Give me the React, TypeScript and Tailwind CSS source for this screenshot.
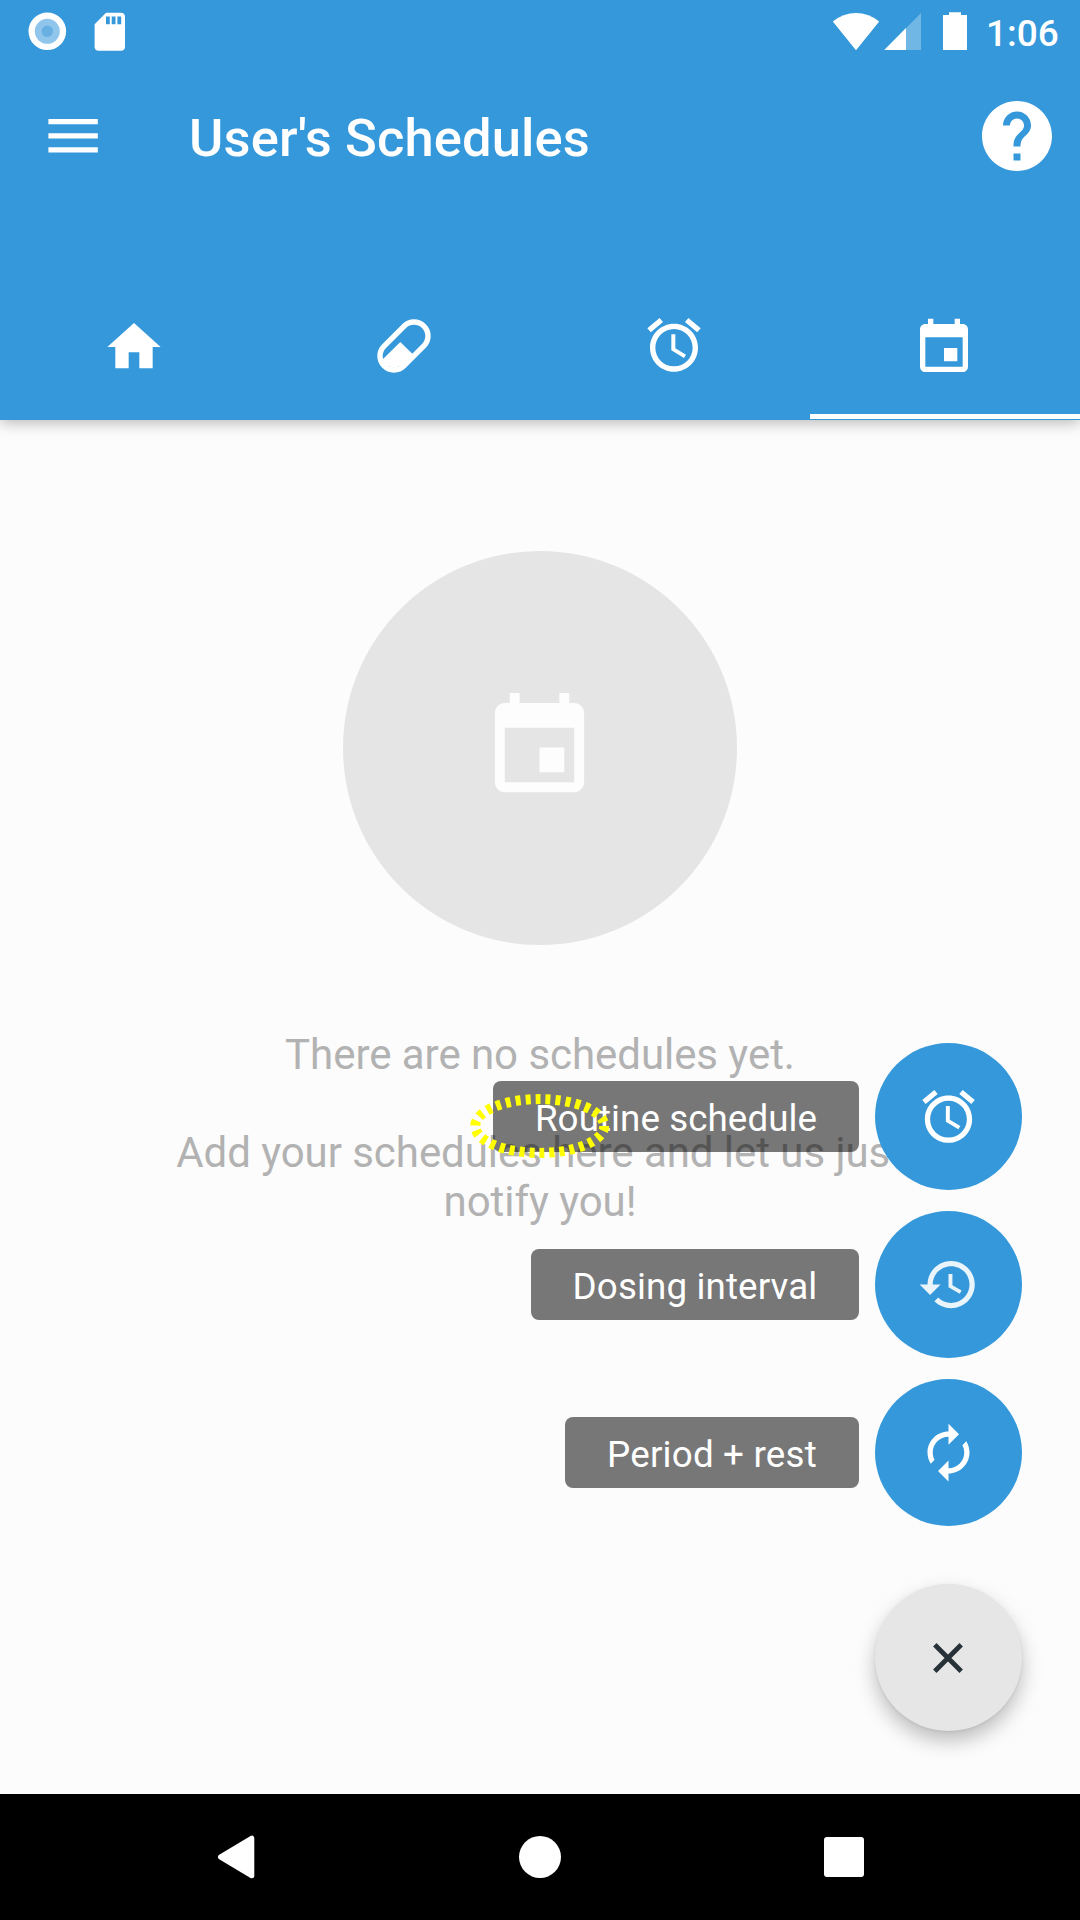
import type { ReactNode } from "react";

const EVENT =
  "M17 12h-5v5h5v-5zM16 1v2H8V1H6v2H5c-1.11 0-1.99.9-1.99 2L3 19c0 1.1.89 2 2 2h14c1.1 0 2-.9 2-2V5c0-1.1-.9-2-2-2h-1V1h-2zm3 18H5V8h14v11z";
const ALARM =
  "M22 5.72l-4.6-3.86-1.29 1.53 4.6 3.86L22 5.72zM7.88 3.39L6.6 1.86 2 5.71l1.29 1.53 4.59-3.85zM12.5 8H11v6l4.75 2.85.75-1.23-4-2.37V8zM12 4c-4.97 0-9 4.03-9 9s4.02 9 9 9c4.97 0 9-4.03 9-9s-4.03-9-9-9zm0 16c-3.87 0-7-3.13-7-7s3.13-7 7-7 7 3.13 7 7-3.13 7-7 7z";
const HOME = "M10 20v-6h4v6h5v-8h3L12 3 2 12h3v8z";
const HISTORY =
  "M13 3c-4.97 0-9 4.03-9 9H1l3.89 3.89.07.14L9 12H6c0-3.87 3.13-7 7-7s7 3.13 7 7-3.13 7-7 7c-1.93 0-3.68-.79-4.94-2.06l-1.42 1.42C8.27 19.99 10.51 21 13 21c4.97 0 9-4.03 9-9s-4.03-9-9-9zm-1 5v5l4.28 2.54.72-1.21-3.5-2.08V8H12z";
const AUTORENEW =
  "M12 6v3l4-4-4-4v3c-4.42 0-8 3.58-8 8 0 1.57.46 3.03 1.24 4.26L6.7 14.8c-.45-.83-.7-1.79-.7-2.8 0-3.31 2.69-6 6-6zm6.76 1.74L17.3 9.2c.44.84.7 1.79.7 2.8 0 3.31-2.69 6-6 6v-3l-4 4 4 4v-3c4.42 0 8-3.58 8-8 0-1.57-.46-3.03-1.24-4.26z";
const HELP =
  "M12 2C6.48 2 2 6.48 2 12s4.48 10 10 10 10-4.48 10-10S17.52 2 12 2zm1 17h-2v-2h2v2zm2.07-7.75l-.9.92C13.45 12.9 13 13.5 13 15h-2v-.5c0-1.1.45-2.1 1.17-2.83l1.24-1.26c.37-.36.59-.86.59-1.41 0-1.1-.9-2-2-2s-2 .9-2 2H8c0-2.21 1.79-4 4-4s4 1.79 4 4c0 .88-.36 1.68-.93 2.25z";
const SD_CARD =
  "M18 2h-8L4.02 8 4 20c0 1.1.9 2 2 2h12c1.1 0 2-.9 2-2V4c0-1.1-.9-2-2-2zm-6 6h-2V4h2v4zm3 0h-2V4h2v4zm3 0h-2V4h2v4z";

function Icon({ d, className }: { d: string; className: string }) {
  return (
    <svg viewBox="0 0 24 24" fill="currentColor" className={className}>
      <path d={d} />
    </svg>
  );
}

function PillIcon() {
  return (
    <svg viewBox="0 0 64 64" className="size-16" fill="none">
      <path
        d="M12.1 32.1 L32.1 12.1 A14 14 0 0 1 51.9 31.9 L31.9 51.9 A14 14 0 0 1 12.1 32.1 Z"
        stroke="white"
        strokeWidth="5.4"
      />
      <path d="M10 46 L28.3 28 L40.6 39.9 L31 51 L22 54 L13 51 Z" fill="white" />
    </svg>
  );
}

function StatusBar() {
  return (
    <div className="flex h-[63px] items-start justify-between text-white">
      <div className="flex items-start">
        <svg viewBox="0 0 40 40" className="mt-[11px] ml-[27px] size-10">
          <circle cx="20.3" cy="20.3" r="18.8" fill="white" />
          <circle cx="20.3" cy="20.3" r="12.5" fill="#90c5ec" />
          <circle cx="20.3" cy="20.3" r="5.7" fill="#68afe2" />
        </svg>
        <Icon d={SD_CARD} className="mt-[8.6px] ml-[20.3px] size-[45.6px]" />
      </div>
      <div className="flex items-start pr-[21px]">
        <svg viewBox="832 12 136 39" className="mt-3 h-[39px] w-[136px]" fill="white">
          <path d="M832.8 21.6 Q843 13 856 13 Q869 13 879.2 21.6 L856 50.2 Z" />
          <path d="M884.3 50 L921 13 V50 Z" fillOpacity="0.3" />
          <path d="M884.3 50 L906 28.1 V50 Z" />
          <path d="M943 15 H949 V12.2 H961 V15 H967 V50 H943 Z" />
        </svg>
        <span className="mt-[12px] ml-[18px] w-[73px] text-[37px] leading-[43px] font-medium whitespace-nowrap">1:06</span>
      </div>
    </div>
  );
}

function Header() {
  return (
    <header className="relative z-10 flex h-[420px] flex-col bg-[#3498db] shadow-[0_3px_14px_rgba(0,0,0,0.27)]">
      <StatusBar />
      <div className="flex h-[147px] items-center pb-px text-white">
        <svg viewBox="0 0 50 36" className="ml-12 h-9 w-[50px]" fill="white">
          <path d="M.4 1h49.4v5.3H.4zM.4 15.2h49.4v5.3H.4zM.4 29.3h49.4v5.3H.4z" />
        </svg>
        <h1 className="ml-[91px] pt-[3px] text-[52.5px] leading-[62px] font-medium tracking-[0.13px]">User's Schedules</h1>
        <Icon d={HELP} className="mr-[21px] ml-auto size-[84px]" />
      </div>
      <nav className="mt-auto grid h-[126px] grid-cols-4 text-white">
        <div className="flex justify-center pt-[21px] pr-[2px]">
          <Icon d={HOME} className="size-16" />
        </div>
        <div className="flex justify-center pt-[19.5px] pr-[2px]">
          <PillIcon />
        </div>
        <div className="flex justify-center pt-[19px] pr-[2px]">
          <Icon d={ALARM} className="size-16" />
        </div>
        <div className="flex flex-col items-center justify-between pt-[21.6px] pb-px">
          <Icon d={EVENT} className="mr-[2px] size-16" />
          <div className="h-[5px] w-full bg-white" />
        </div>
      </nav>
    </header>
  );
}

function MenuItem({ label, labelClass, children }: { label: string; labelClass: string; children: ReactNode }) {
  return (
    <div className="flex items-center gap-4">
      <span
        className={`flex h-[71px] items-center justify-center rounded-[8px] bg-black/53 pt-[3px] text-[36.75px] leading-[43px] whitespace-nowrap text-white ${labelClass}`}
      >
        {label}
      </span>
      <div className="flex size-[147px] items-center justify-center rounded-full bg-[#3498db]">{children}</div>
    </div>
  );
}

export default function App() {
  return (
    <div className="flex h-[1920px] w-[1080px] flex-col overflow-hidden bg-[#fcfcfc] font-['Roboto',sans-serif]">
      <Header />
      <main className="relative flex grow flex-col items-center pt-[131px]">
        <div className="flex size-[394px] items-center justify-center rounded-full bg-[#e5e5e5] text-[#fdfdfd]">
          <Icon d={EVENT} className="mr-[1px] mb-[1px] size-[119px]" />
        </div>
        <div className="mt-[85px] px-[120px] text-center text-[42px] leading-[49px] tracking-[-0.05px] text-[#b2b2b2]">
          <p>There are no schedules yet.</p>
          <p className="mt-[49px]">
            Add your schedules here and let us just
            <br />
            notify you!
          </p>
        </div>

        <div className="absolute top-[623.3px] right-[58px] flex flex-col items-end gap-[21px]">
          <MenuItem label="Routine schedule" labelClass="w-[366px] tracking-[0.07px]">
            <Icon d={ALARM} className="size-[63px] text-white" />
          </MenuItem>
          <MenuItem label="Dosing interval" labelClass="w-[328px] tracking-[0.12px]">
            <Icon d={HISTORY} className="size-[63px] text-[#e9f4fb]" />
          </MenuItem>
          <MenuItem label="Period + rest" labelClass="w-[294px] tracking-[0.2px]">
            <Icon d={AUTORENEW} className="size-[63px] text-white" />
          </MenuItem>
          <div className="mt-[37px] flex size-[147px] items-center justify-center rounded-full bg-[#e6e6e6] shadow-[0_10px_20px_rgba(0,0,0,0.25),0_1px_3px_rgba(0,0,0,0.08)]">
            <svg viewBox="0 0 32 32" className="mr-[1px] size-8" stroke="#263238" strokeWidth="4.8">
              <path d="M2.8 2.8 L29.2 29.2 M29.2 2.8 L2.8 29.2" />
            </svg>
          </div>
        </div>

        <svg viewBox="0 0 144 68" className="absolute top-[672px] left-[468px] h-[68px] w-36" fill="none">
          <ellipse cx="71.7" cy="34" rx="64.5" ry="26.9" stroke="#ffff00" strokeWidth="10" strokeDasharray="5 5" />
        </svg>
      </main>
      <footer className="flex h-[126px] items-center bg-black">
        <svg viewBox="0 0 40 44" className="ml-[216px] h-11 w-10" fill="white" stroke="white" strokeWidth="5" strokeLinejoin="round">
          <path d="M4.5 22 L35.8 3.2 V40.8 Z" />
        </svg>
        <div className="ml-[263px] size-[42px] rounded-full bg-white" />
        <div className="ml-[263px] size-[40px] rounded-[3px] bg-white" />
      </footer>
    </div>
  );
}
